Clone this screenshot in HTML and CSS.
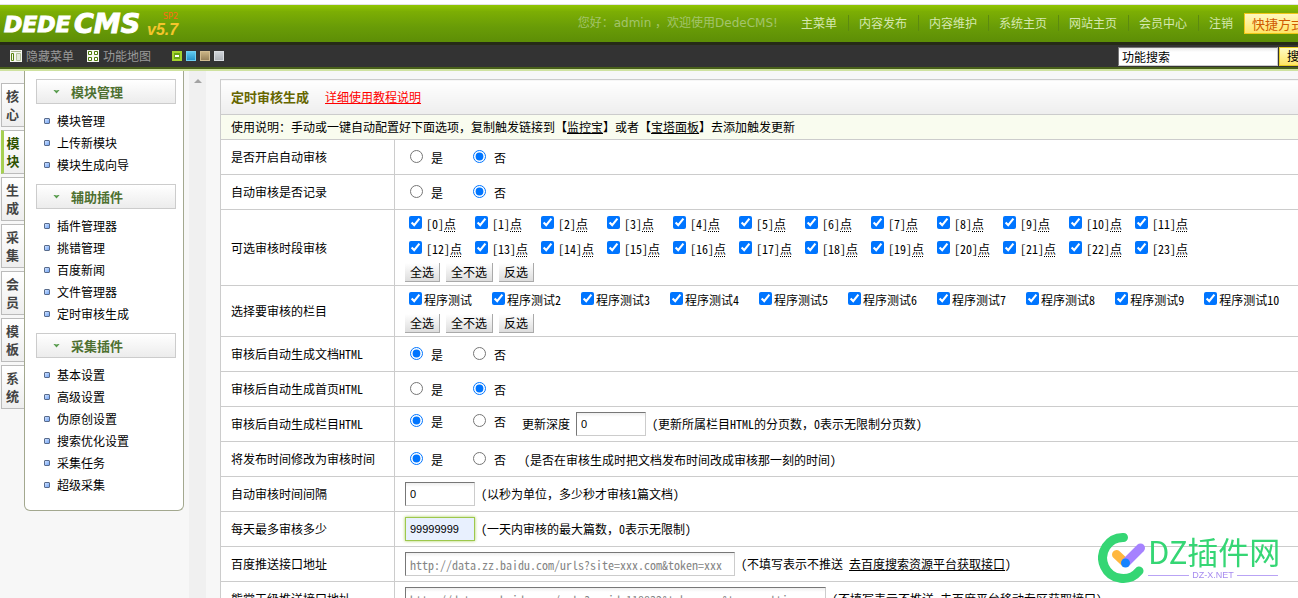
FILE: index.html
```html
<!DOCTYPE html>
<html lang="zh-CN">
<head>
<meta charset="utf-8">
<title>DedeCMS</title>
<link rel="stylesheet" href="styles.css">
</head>
<body>
<header class="topbar">
  <svg class="logo" width="176" height="32" viewBox="0 0 176 32" role="img" aria-label="DEDECMS v5.7 SP2">
    <text class="logo-name" x="-1" y="25">DEDE</text>
    <text class="logo-name logo-cms" x="69" y="26">CMS</text>
    <text class="logo-version" x="142" y="28">v5.7</text>
    <text class="logo-sp" x="158" y="12">SP2</text>
  </svg>
  <div class="greeting">您好：admin ，欢迎使用DedeCMS!</div>
  <nav class="topnav">
    <a href="#">主菜单</a><a href="#">内容发布</a><a href="#">内容维护</a><a href="#">系统主页</a><a href="#">网站主页</a><a href="#">会员中心</a><a href="#">注销</a>
  </nav>
  <button class="shortcut" type="button">快捷方式</button>
</header>
<div class="toolbar">
  <a class="tool" href="#"><svg width="12" height="12" viewBox="0 0 12 12"><path fill="#f4f6ef" d="M0 0h12v12H0z"/><path fill="#a9b58c" d="M1 1h10v1H1z"/><path fill="none" stroke="#5a8411" d="M1.500 3.500h2v7h-2z"/><path fill="#e3e9d8" stroke="#b5c39a" d="M6.500 3.500h4v7h-4z"/></svg>隐藏菜单</a>
  <a class="tool" href="#"><svg width="12" height="12" viewBox="0 0 12 12"><path fill="#f4f6ef" d="M0 0h12v12H0z"/><path fill="#fff" stroke="#4d7a0a" d="M1.500 1.500h3v3h-3zM7.500 1.500h3v3h-3zM1.500 7.500h3v3h-3zM7.500 7.500h3v3h-3z"/></svg>功能地图</a>
  <div class="skins">
    <button class="skin skin-green" type="button" aria-label="绿色"></button>
    <button class="skin skin-blue" type="button" aria-label="蓝色"></button>
    <button class="skin skin-brown" type="button" aria-label="棕色"></button>
    <button class="skin skin-gray" type="button" aria-label="灰色"></button>
  </div>
  <form class="search">
    <input type="text" value="功能搜索" aria-label="功能搜索">
    <button type="button">搜索</button>
  </form>
</div>
<div class="page">
  <nav class="tabs">
    <a href="#">核<br>心</a><a class="active" href="#">模<br>块</a><a href="#">生<br>成</a><a href="#">采<br>集</a><a href="#">会<br>员</a><a href="#">模<br>板</a><a href="#">系<br>统</a>
  </nav>
  <aside class="menu">
    <h2>模块管理</h2>
    <ul><li><a href="#">模块管理</a></li><li><a href="#">上传新模块</a></li><li><a href="#">模块生成向导</a></li></ul>
    <h2>辅助插件</h2>
    <ul><li><a href="#">插件管理器</a></li><li><a href="#">挑错管理</a></li><li><a href="#">百度新闻</a></li><li><a href="#">文件管理器</a></li><li><a href="#">定时审核生成</a></li></ul>
    <h2>采集插件</h2>
    <ul><li><a href="#">基本设置</a></li><li><a href="#">高级设置</a></li><li><a href="#">伪原创设置</a></li><li><a href="#">搜索优化设置</a></li><li><a href="#">采集任务</a></li><li><a href="#">超级采集</a></li></ul>
  </aside>
  <div class="scrollbar"><svg width="8" height="5" viewBox="0 0 8 5"><path fill="#a3a3a3" d="M0 4 4 0l4 4z"/></svg></div>
  <main class="content">
    <table class="settings">
      <thead>
        <tr class="title"><th colspan="2"><h1>定时审核生成</h1><a href="#">详细使用教程说明</a></th></tr>
        <tr class="notice"><td colspan="2">使用说明：手动或一键自动配置好下面选项，复制触发链接到【<a href="#">监控宝</a>】或者【<a href="#">宝塔面板</a>】去添加触发更新</td></tr>
      </thead>
      <tbody>
        <tr><th>是否开启自动审核</th><td><div class="radios"><label><input type="radio" name="open">是</label><label><input type="radio" name="open" checked>否</label></div></td></tr>
        <tr><th>自动审核是否记录</th><td><div class="radios"><label><input type="radio" name="log">是</label><label><input type="radio" name="log" checked>否</label></div></td></tr>
        <tr><th>可选审核时段审核</th><td>
          <div class="hours">
            <label><input type="checkbox" checked>[0]<u>点</u></label><label><input type="checkbox" checked>[1]<u>点</u></label><label><input type="checkbox" checked>[2]<u>点</u></label><label><input type="checkbox" checked>[3]<u>点</u></label><label><input type="checkbox" checked>[4]<u>点</u></label><label><input type="checkbox" checked>[5]<u>点</u></label><label><input type="checkbox" checked>[6]<u>点</u></label><label><input type="checkbox" checked>[7]<u>点</u></label><label><input type="checkbox" checked>[8]<u>点</u></label><label><input type="checkbox" checked>[9]<u>点</u></label><label><input type="checkbox" checked>[10]<u>点</u></label><label><input type="checkbox" checked>[11]<u>点</u></label>
            <label><input type="checkbox" checked>[12]<u>点</u></label><label><input type="checkbox" checked>[13]<u>点</u></label><label><input type="checkbox" checked>[14]<u>点</u></label><label><input type="checkbox" checked>[15]<u>点</u></label><label><input type="checkbox" checked>[16]<u>点</u></label><label><input type="checkbox" checked>[17]<u>点</u></label><label><input type="checkbox" checked>[18]<u>点</u></label><label><input type="checkbox" checked>[19]<u>点</u></label><label><input type="checkbox" checked>[20]<u>点</u></label><label><input type="checkbox" checked>[21]<u>点</u></label><label><input type="checkbox" checked>[22]<u>点</u></label><label><input type="checkbox" checked>[23]<u>点</u></label>
          </div>
          <div class="buttons"><button type="button">全选</button><button type="button">全不选</button><button type="button">反选</button></div>
        </td></tr>
        <tr><th>选择要审核的栏目</th><td>
          <div class="channels">
            <label><input type="checkbox" checked>程序测试</label><label><input type="checkbox" checked>程序测试2</label><label><input type="checkbox" checked>程序测试3</label><label><input type="checkbox" checked>程序测试4</label><label><input type="checkbox" checked>程序测试5</label><label><input type="checkbox" checked>程序测试6</label><label><input type="checkbox" checked>程序测试7</label><label><input type="checkbox" checked>程序测试8</label><label><input type="checkbox" checked>程序测试9</label><label><input type="checkbox" checked>程序测试10</label>
          </div>
          <div class="buttons"><button type="button">全选</button><button type="button">全不选</button><button type="button">反选</button></div>
        </td></tr>
        <tr><th>审核后自动生成文档HTML</th><td><div class="radios"><label><input type="radio" name="doc" checked>是</label><label><input type="radio" name="doc">否</label></div></td></tr>
        <tr><th>审核后自动生成首页HTML</th><td><div class="radios"><label><input type="radio" name="home">是</label><label><input type="radio" name="home" checked>否</label></div></td></tr>
        <tr><th>审核后自动生成栏目HTML</th><td><div class="line"><div class="radios"><label><input type="radio" name="col" checked>是</label><label><input type="radio" name="col">否</label></div><label class="depth" for="depth">更新深度</label><input class="short" id="depth" type="text" value="0"><span>(更新所属栏目HTML的分页数<span class="wide">，</span>0表示无限制分页数)</span></div></td></tr>
        <tr><th>将发布时间修改为审核时间</th><td><div class="radios"><label><input type="radio" name="time" checked>是</label><label><input type="radio" name="time">否</label><span class="remark">(是否在审核生成时把文档发布时间改成审核那一刻的时间)</span></div></td></tr>
        <tr><th><label for="gap">自动审核时间间隔</label></th><td><div class="line"><input class="short" id="gap" type="text" value="0"><span>(以秒为单位<span class="wide">，</span>多少秒才审核1篇文档)</span></div></td></tr>
        <tr><th><label for="max">每天最多审核多少</label></th><td><div class="line"><input class="short focused" id="max" type="text" value="99999999"><span>(一天内审核的最大篇数<span class="wide">，</span>0表示无限制)</span></div></td></tr>
        <tr><th><label for="push">百度推送接口地址</label></th><td><div class="line"><input class="url" id="push" type="text" placeholder="http://data.zz.baidu.com/urls?site=xxx.com&amp;token=xxx"><span>(不填写表示不推送 <a href="#">去百度搜索资源平台获取接口</a>)</span></div></td></tr>
        <tr><th><label for="daily">熊掌天级推送接口地址</label></th><td><div class="line"><input class="url long" id="daily" type="text" placeholder="http://data.zz.baidu.com/urls?appid=118832&amp;token=xxx&amp;type=multi"><span>(不填写表示不推送 <a href="#">去百度平台移动专区获取接口</a>)</span></div></td></tr>
      </tbody>
    </table>
  </main>
</div>
<div class="watermark">
  <svg width="48" height="51" viewBox="0 0 48 51" aria-hidden="true"><g fill="none" stroke-linecap="round"><path stroke="#35d674" stroke-width="9" d="M25.500 4.500A20.500 20.500 0 1 0 41 38"/><path stroke="#ffb73e" stroke-width="9" d="m18.500 21.500 8.500 8"/><path stroke="#a682ff" stroke-width="9" d="M28 29.500 42.500 15"/></g><circle cx="27.500" cy="30" r="4.500" fill="#1683ff"/></svg>
  <div class="mark-text"><div class="mark-name">DZ插件网</div><div class="mark-site">DZ-X.NET</div></div>
</div>
</body>
</html>
```
FILE: styles.css
```css
*, *::before, *::after { box-sizing: border-box; }
body {
  margin: 0;
  height: 100vh;
  overflow: hidden;
  background: #f7f7f7;
  color: #000;
  font: 12px/16px "Noto Sans CJK SC", sans-serif;
}
input, button { font: inherit; font-feature-settings: inherit; margin: 0; }
a { color: inherit; }
h1, h2, ul { margin: 0; padding: 0; }

.topbar {
  display: flex;
  align-items: center;
  min-width: 1312px;
  height: 45px;
  border-top: 4px solid #fff;
  border-bottom: 3px solid #262b17;
  background: linear-gradient(#e3e3e3 1px, #90c600 1px, #7cae04 20%, #699c07 60%, #5d8e06);
}
.logo { flex: none; margin: 0 auto 0 5px; overflow: visible; }
.logo-name { font: italic bold 22px "DejaVu Sans", sans-serif; fill: #fff; stroke: #fff; stroke-width: 1px; }
.logo-cms { font-size: 27px; }
.logo-version { font: italic bold 16px "Liberation Sans", sans-serif; fill: #f5c52c; }
.logo-sp { font: 8px "DejaVu Sans", sans-serif; fill: #ff6a16; }
.greeting {
  margin-right: 12px;
  color: #a3c46c;
  font-family: "DejaVu Sans", "Noto Sans CJK SC", sans-serif;
}
.topnav { display: flex; }
.topnav a {
  padding: 0 11px 0 10px;
  border-left: 1px solid #5c8a10;
  color: #d6e8b0;
  text-decoration: none;
}
.topnav a:first-child { border-left-color: transparent; }
.shortcut {
  height: 21px;
  padding: 0 7px;
  border: 1px solid #f0c818;
  background: linear-gradient(#fff8c0, #ffe566);
  color: #d05a00;
  font-size: 13px;
  line-height: 19px;
}

.toolbar {
  display: flex;
  align-items: center;
  min-width: 1319px;
  height: 26px;
  padding: 0 0 2px 10px;
  border-bottom: 2px solid #cfe2a0;
  background: linear-gradient(#333 22px, #49611a 22px);
  color: #999;
}
.tool { display: flex; align-items: center; gap: 4px; margin-right: 13px; text-decoration: none; }
.skins { display: flex; gap: 4px; margin-left: 8px; }
.skin { width: 10px; height: 10px; padding: 0; border: 1px solid; }
.skin-green { border: 2px solid #a4d32d; background: linear-gradient(#fff, #fff) center / 4px 2px no-repeat #69a414; }
.skin-blue { border-color: #6fd0f2; background: linear-gradient(#5fcaf0, #2795cc); }
.skin-brown { border-color: #d2bd92; background: linear-gradient(#c9b283, #98825a); }
.skin-gray { border-color: #d9dce0; background: linear-gradient(#cfd3d8, #aeb3b8); }
.search { display: flex; gap: 1px; margin-left: auto; }
.search input {
  width: 160px;
  height: 19px;
  padding: 0 3px;
  border: 1px solid #888;
  border-color: #777 #ccc #ccc #777;
  background: linear-gradient(#e8e8e8, #fff 4px);
}
.search button {
  width: 40px;
  height: 19px;
  padding: 0;
  border: 1px solid #e8cf20;
  background: linear-gradient(#fffbc4, #ffe566);
}

.page { display: flex; align-items: flex-start; min-width: 1312px; }
.tabs { display: grid; gap: 3px; width: 24px; padding: 12px 0 0 1px; }
.tabs a {
  padding: 3px 1px 3px 0;
  border: 1px solid #bbb;
  border-right: 0;
  background: linear-gradient(#fff, #eee);
  color: #444;
  font-size: 13px;
  font-weight: bold;
  line-height: 18px;
  text-align: center;
  text-decoration: none;
}
.tabs .active { border-left: 3px solid #a5cf52; padding-right: 2px; color: #2f5200; }

.menu {
  width: 160px;
  margin-right: 5px;
  padding: 8px 7px 6px 11px;
  border: 1px solid #a3a88f;
  border-top: 0;
  border-radius: 0 0 6px 6px;
  background: #fff;
}
.menu h2 {
  display: flex;
  align-items: center;
  gap: 11px;
  height: 25px;
  padding-left: 16px;
  border: 1px solid #ccc;
  background: linear-gradient(#fff, #ececec);
  color: #4e7030;
  font-size: 13px;
}
.menu h2::before { content: ""; width: 7px; height: 4px; background: #579b4c; clip-path: polygon(0 0, 50% 25%, 100% 0, 50% 100%); }
.menu ul { padding: 6px 0 8px 8px; list-style: none; }
.menu li { display: flex; align-items: center; gap: 7px; height: 22px; }
.menu li::before { content: ""; width: 6px; height: 6px; border: 1px solid #586b8c; border-radius: 1px; background: linear-gradient(135deg, #d0e2ff, #75a6f5); }
.menu a { text-decoration: none; }

.scrollbar { align-self: stretch; width: 17px; min-height: 528px; background: #f0f0f0; text-align: center; }

.content { flex: 1; padding: 8px 0 0 14px; }
.settings { width: 100%; border-collapse: collapse; background: #fff; }
.settings th, .settings td { height: 35px; padding: 3px 9px 3px 10px; border: 1px solid #ccc; text-align: left; font-weight: normal; }
.settings tbody { font-feature-settings: "hwid"; }
.settings .wide { font-feature-settings: normal; }
.settings tbody th { width: 174px; white-space: nowrap; }
.settings .title th { background: linear-gradient(#fff, #eee); }
.title h1 { display: inline-block; margin-right: 16px; color: #666600; font-size: 13px; }
.title a { color: #f00; }
.settings .notice td { height: 25px; background: #f9fcef; }

.settings input[type="radio"], .settings input[type="checkbox"] { width: 13px; height: 13px; flex: none; }
.radios, .radios label, .line, .channels, .channels label, .hours label, .buttons { display: flex; }
.radios { gap: 30px; padding: 2px 0 0 5px; }
.radios label { gap: 8px; }
.remark { margin-left: -12px; }
.line { align-items: center; gap: 6px; }
.depth { margin-left: 10px; }
.line .radios { align-self: flex-start; }
.hours { display: grid; grid-template-columns: repeat(12, 66px); padding-left: 4px; }
.hours label { height: 25px; padding-top: 3px; }
.hours input { margin-right: 4px; }
.hours u { text-decoration: underline dotted 1px; text-underline-offset: 2px; }
.channels { gap: 20px; height: 25px; padding: 3px 0 0 4px; white-space: nowrap; }
.channels label { gap: 2px; }
.buttons { gap: 6px; }
.buttons button {
  height: 19px;
  padding: 0 5px;
  border: 0 solid #aaa;
  border-width: 0 1px 1px 0;
  background: linear-gradient(#fff, #ddd);
}
.line input[type="text"] {
  height: 24px;
  padding: 0 4px;
  border: 1px solid #ccc;
  border-color: #777 #ccc #ccc #777;
  background: linear-gradient(#eee, #fff 4px);
  outline: 0;
}
.line .short { width: 70px; font-family: "Liberation Sans", sans-serif; font-size: 11px; }
.line input.focused { border-color: #9dc84c; background: #e8f0fe; box-shadow: 0 0 3px #a9cf5c; }
.line .url { width: 330px; }
.line .long { width: 421px; }
.url::placeholder { color: #858585; }

.watermark { position: fixed; right: 20px; bottom: 14px; display: flex; gap: 2px; }
.mark-text { width: 130px; color: #35d674; }
.mark-name { font-size: 31px; line-height: 36px; white-space: nowrap; }
.mark-site {
  display: flex;
  align-items: center;
  gap: 3px;
  padding-top: 1px;
  color: #a78bef;
  font: 9px/10px "Liberation Sans", sans-serif;
}
.mark-site::before, .mark-site::after { content: ""; flex: 1; height: 1px; background: #b9a3f5; }
```
